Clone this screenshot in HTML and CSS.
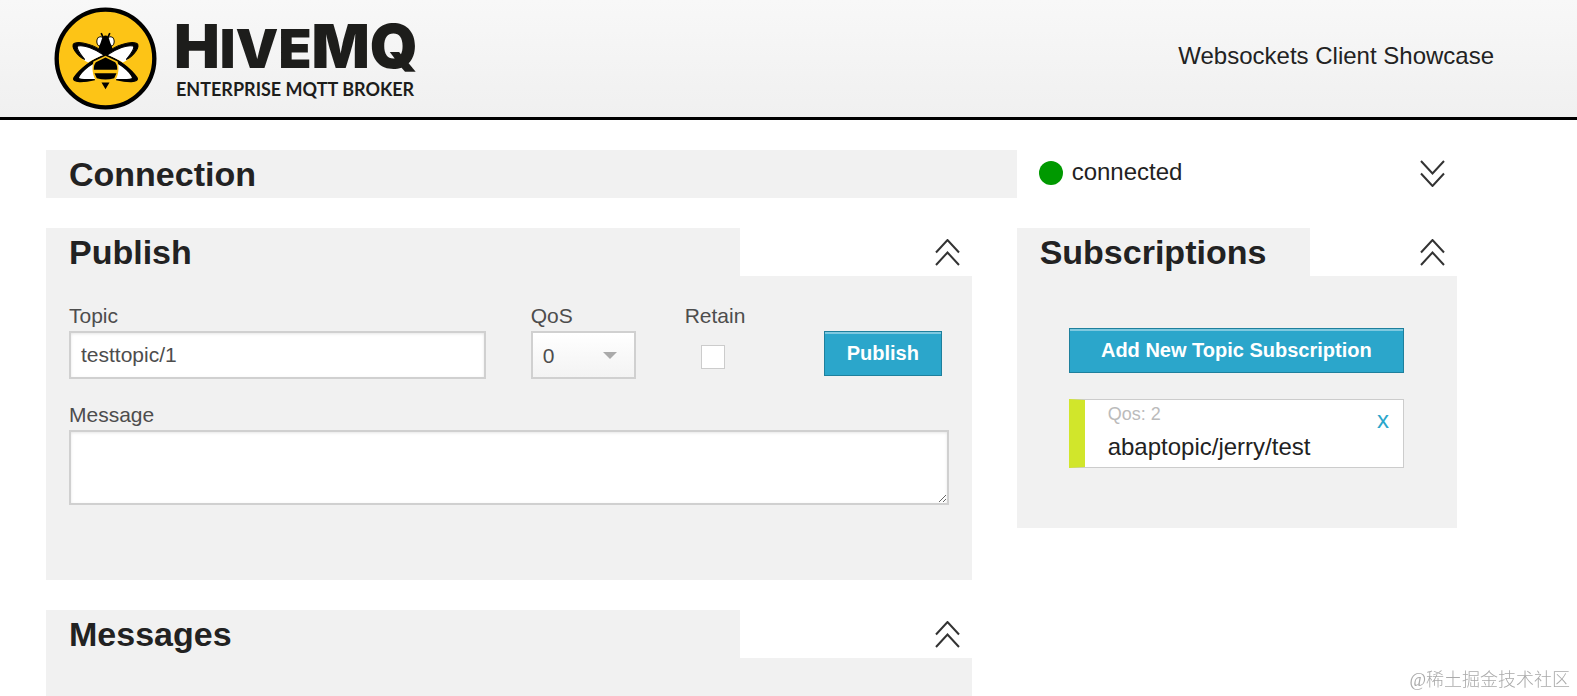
FILE: index.html
```html
<!DOCTYPE html>
<html lang="en">
<head>
  <meta charset="UTF-8">
  <meta name="viewport" content="width=device-width,initial-scale=1">
  <title>HiveMQ Websockets Client Showcase</title>
  <link rel="stylesheet" href="styles.css">
</head>
<body>
  <header class="header">
    <div class="logo">
      <svg class="logo-bee" viewBox="14 21 308 308" aria-hidden="true">
        <circle cx="168" cy="175" r="146" fill="#fdc416" stroke="#000" stroke-width="13"/>
        <!-- lower wings -->
        <path d="M158 172C128 182 92 214 88 236C102 242 126 240 140 236C128 220 128 196 142 184Z" fill="#fff"/>
        <path d="M178 172C208 182 244 214 248 236C234 242 210 240 196 236C208 220 208 196 194 184Z" fill="#fff"/>
        <path d="M168 164C130 176 92 206 74 232C66 248 104 246 136 238C112 238 92 240 86 234C94 212 132 184 168 170Z" stroke="#000" stroke-width="4"/>
        <path d="M168 164C206 176 244 206 262 232C270 248 232 246 200 238C224 238 244 240 250 234C242 212 204 184 168 170Z" stroke="#000" stroke-width="4"/>
        <!-- upper wings -->
        <path d="M165 163C140 140 96 124 76 134C76 152 98 180 116 187C130 178 148 170 165 163Z" fill="#fff"/>
        <path d="M171 163C196 140 240 124 260 134C260 152 238 180 220 187C206 178 188 170 171 163Z" fill="#fff"/>
        <path d="M166 158C136 134 92 122 74 130C62 138 84 168 106 178C92 160 80 148 84 138C102 132 136 146 162 164Z" stroke="#000" stroke-width="3"/>
        <path d="M170 158C200 134 244 122 262 130C274 138 252 168 230 178C244 160 256 148 252 138C234 132 200 146 174 164Z" stroke="#000" stroke-width="3"/>
        <!-- head -->
        <path d="M155 99L162 114M181 99L174 114" stroke="#000" stroke-width="5"/>
        <ellipse cx="153" cy="124" rx="11" ry="14" fill="#fff" stroke="#000" stroke-width="3"/>
        <ellipse cx="183" cy="124" rx="11" ry="14" fill="#fff" stroke="#000" stroke-width="3"/>
        <path d="M168 106C180 106 178 122 186 136C192 148 184 158 168 166C152 158 144 148 150 136C158 122 156 106 168 106Z"/>
        <!-- body -->
        <path d="M168 167L204 184C210 204 206 226 198 238H138C130 226 126 204 132 184Z" fill="#fdc416"/>
        <path d="M168 172L197 186C203 194 203 201 203 209H133C133 201 133 194 139 186Z"/>
        <path d="M135 219H201L194 234Q168 242 142 234ZM156 247H180L168 267Z"/>
      </svg>
      <div class="logo-text">
        <div class="logo-name">H<span class="logo-small">IVE</span>MQ</div>
        <div class="logo-sub">ENTERPRISE MQTT BROKER</div>
      </div>
    </div>
    <div class="showcase">Websockets Client Showcase</div>
  </header>

  <main class="main">
    <!-- Connection -->
    <section class="connection">
      <h3 class="connection-title">Connection</h3>
      <div class="status">
        <span class="status-dot"></span>
        <span class="status-text">connected</span>
        <button class="toggle" type="button" aria-label="Expand connection">
          <svg width="25" height="27" viewBox="0 0 25 27"><path d="M1 1L12.5 13.5L24 1M1 13.5L12.5 26L24 13.5"/></svg>
        </button>
      </div>
    </section>

    <div class="left">
      <!-- Publish -->
      <section>
        <div class="panel-head">
          <h3 class="tab">Publish</h3>
          <button class="toggle" type="button" aria-label="Collapse publish">
            <svg width="25" height="27" viewBox="0 0 25 27"><path d="M1 13.5L12.5 1L24 13.5M1 26L12.5 13.5L24 26"/></svg>
          </button>
        </div>
        <form class="panel publish-form">
          <div class="publish-row">
            <div>
              <label for="publishTopic">Topic</label>
              <input class="field" type="text" id="publishTopic" value="testtopic/1">
            </div>
            <div>
              <label for="publishQos">QoS</label>
              <div class="select-wrap">
                <select id="publishQos">
                  <option>0</option>
                  <option>1</option>
                  <option>2</option>
                </select>
              </div>
            </div>
            <div>
              <label for="publishRetain">Retain</label>
              <input class="check" type="checkbox" id="publishRetain">
            </div>
            <div class="publish-action">
              <button class="btn" type="button">Publish</button>
            </div>
          </div>
          <label for="publishMessage">Message</label>
          <textarea class="field message" id="publishMessage"></textarea>
        </form>
      </section>

      <!-- Messages -->
      <section>
        <div class="panel-head">
          <h3 class="tab">Messages</h3>
          <button class="toggle" type="button" aria-label="Collapse messages">
            <svg width="25" height="27" viewBox="0 0 25 27"><path d="M1 13.5L12.5 1L24 13.5M1 26L12.5 13.5L24 26"/></svg>
          </button>
        </div>
        <div class="panel messages"></div>
      </section>
    </div>

    <!-- Subscriptions -->
    <section class="right">
      <div class="panel-head">
        <h3 class="tab tab-sub">Subscriptions</h3>
        <button class="toggle" type="button" aria-label="Collapse subscriptions">
          <svg width="25" height="27" viewBox="0 0 25 27"><path d="M1 13.5L12.5 1L24 13.5M1 26L12.5 13.5L24 26"/></svg>
        </button>
      </div>
      <div class="panel subs">
        <button class="btn btn-wide" type="button">Add New Topic Subscription</button>
        <div class="sub">
          <div class="sub-info">
            <div class="sub-qos">Qos: 2</div>
            <div class="sub-topic">abaptopic/jerry/test</div>
          </div>
          <a class="sub-close" href="#">x</a>
        </div>
      </div>
    </section>
  </main>

  <div class="watermark">@稀土掘金技术社区</div>
</body>
</html>
```
FILE: styles.css
```css
* { box-sizing: border-box; }
body { background: #fff; color: #222; font-family: "Liberation Sans", Arial, sans-serif; font-size: 24px; margin: 0; }
h3 { margin: 0; font-size: 34px; line-height: 48px; font-weight: bold; color: #222; }

.header {
  display: flex;
  justify-content: space-between;
  align-items: center;
  height: 120px;
  padding: 0 83px 0 54px;
  border-bottom: 3px solid #000;
  background: linear-gradient(#f8f8f8, #f0f0f0);
}
.logo { display: flex; align-items: center; gap: 17px; }
.logo-bee { width: 103px; height: 103px; }
.logo-text { font-family: Lato, sans-serif; color: #1d1d1b; white-space: nowrap; }
.logo-name { font-family: Inter, sans-serif; font-size: 61px; line-height: 58px; font-weight: 900; }
.logo-small { font-size: 54px; }
.logo-sub { padding-left: 2px; font-size: 18px; line-height: 22px; font-weight: bold; }
.showcase { line-height: 28px; padding-bottom: 6px; }

/* 12 column grid */
.main {
  display: grid;
  grid-template-columns: repeat(12, 1fr);
  column-gap: 45px;
  row-gap: 30px;
  align-items: start;
  padding: 30px 120px 0 46px;
}
.connection { grid-column: span 12; display: grid; grid-template-columns: subgrid; }
.connection-title { grid-column: span 8; margin-right: -45px; padding-left: 23px; background: #f1f1f1; }
.status { grid-column: span 4; display: flex; align-items: center; padding: 0 12px 2px 22px; }
.status-dot { width: 24px; height: 24px; margin-right: 9px; border-radius: 50%; background: #009900; }
.status-text { flex: 1; padding-bottom: 2px; }
.left { grid-column: span 8; display: grid; gap: 30px; }
.right { grid-column: span 4; }

.panel-head { display: flex; justify-content: space-between; align-items: center; }
.panel-head .toggle { margin-right: 12px; }
.tab { flex: 0 0 auto; width: 75%; padding-left: 23px; background: #f1f1f1; }
.tab-sub { width: 66.66%; }
.panel { background: #f1f1f1; }
.toggle { padding: 0; border: 0; background: none; line-height: 0; cursor: pointer; }
.toggle path { fill: none; stroke: #333; stroke-width: 2; }

label { display: block; font-size: 21px; line-height: 30px; color: #4d4d4d; }
.publish-form { padding: 25px 23px 75px; }
.publish-row { display: grid; grid-template-columns: 1fr 109px 94px 125px; column-gap: 45px; margin-bottom: 21px; }
.publish-action { padding-top: 30px; }
.field, select {
  display: block;
  height: 48px;
  padding: 0 10px;
  border: 2px solid #d0d0d0;
  border-radius: 0;
  background: #fff;
  font-family: inherit;
  font-size: 21px;
  color: #4d4d4d;
}
.field { width: 100%; box-shadow: inset 0 1px 3px rgba(0,0,0,0.1); }
.message { height: 75px; resize: vertical; }
.select-wrap { position: relative; width: 105px; }
.select-wrap::after {
  content: "";
  position: absolute;
  right: 19px;
  top: 21px;
  border: 7px solid transparent;
  border-top-color: #aaa;
  border-bottom: 0;
  pointer-events: none;
}
select { width: 100%; appearance: none; background: linear-gradient(#fff, #f3f3f3); }
.check {
  appearance: none;
  display: block;
  width: 24px;
  height: 24px;
  margin: 14px 0 0 16px;
  border: 1px solid #ccc;
  background: #fff;
}
.btn {
  height: 45px;
  padding: 0 22px;
  border: 1px solid #1e809d;
  background: #2ba6cb;
  box-shadow: inset 0 2px 0 rgba(255,255,255,0.4);
  color: #fff;
  font-family: inherit;
  font-size: 20px;
  font-weight: bold;
  cursor: pointer;
}
.btn-wide { width: 100%; }
.messages { height: 38px; }

.subs { padding: 52px 53px 60px 52px; }
.sub {
  display: flex;
  justify-content: space-between;
  height: 69px;
  margin-top: 26px;
  padding: 0 14px 0 23px;
  border: 1px solid #ccc;
  border-left: 16px solid #d1e62b;
  background: #fff;
}
.sub-qos { font-size: 18px; line-height: 28px; color: #bbb; }
.sub-topic { line-height: 38px; }
.sub-close { line-height: 40px; color: #2ba6cb; text-decoration: none; }

.watermark {
  position: fixed;
  right: 7px;
  bottom: 3px;
  font-family: "Liberation Serif", "Noto Sans CJK SC", serif;
  font-size: 18px;
  line-height: 26px;
  font-weight: 300;
  color: #aaa;
}
```
